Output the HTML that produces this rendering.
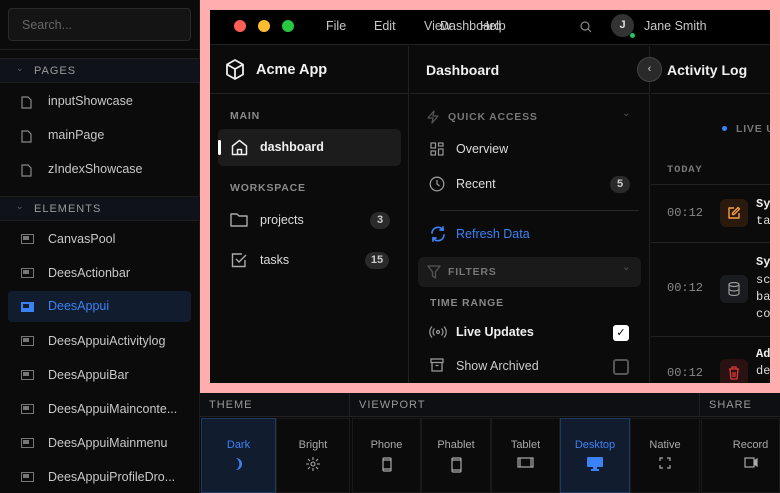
<!DOCTYPE html>
<html><head><meta charset="utf-8"><style>
*{box-sizing:border-box;margin:0;padding:0}
body{width:780px;height:493px;overflow:hidden;background:#0b0b0b;font-family:"Liberation Sans",sans-serif;position:relative;color:#ccc}
.abs{position:absolute}
.side{left:0;top:0;width:200px;height:493px;background:#0b0b0b;border-right:1px solid #1c1c1c}
.search{left:8px;top:8px;width:183px;height:33px;border:1px solid #2a2a2a;border-radius:4px;background:#141414;color:#666;font-size:12.5px;padding:9px 13px}
.sec{left:0;width:200px;height:25px;background:#0f1218;border-top:1px solid #1f1f1f;border-bottom:1px solid #1f1f1f;font-size:11px;letter-spacing:1px;color:#9a9a9a;padding:6px 0 0 34px}
.sec i{position:absolute;left:16px;top:4px;font-style:normal;color:#666;font-size:9px}
.it{left:0;width:200px;height:32px;font-size:12.5px;color:#c8c8c8;padding:0 0 0 48px;line-height:32px;white-space:nowrap}
.it svg{position:absolute;left:21px;top:11px}
.sel{left:8px;width:183px;background:#111c2e;border-radius:4px;color:#3b82f6;padding-left:40px}
.sel svg{left:13px}
.pink{left:200px;top:0;width:580px;height:393px;background:#ffadad}
.app{left:210px;top:10px;width:560px;height:373px;background:#0b0b0b;overflow:hidden}
.top{left:0;top:0;width:560px;height:35px;background:#000;border-bottom:1px solid #222}
.dot{top:10px;width:12px;height:12px;border-radius:50%}
.menu{top:9px;font-size:12.5px;color:#c8c8c8}
.nav{left:0;top:36px;width:199px;height:340px;border-right:1px solid #222}
.lbl{font-size:10.5px;font-weight:bold;letter-spacing:.8px;color:#8a8a8a;white-space:nowrap}
.badge{width:20px;height:17px;border-radius:9px;background:#2a2a2a;color:#ccc;font-size:11px;font-weight:bold;text-align:center;line-height:17px}
.cb{width:16px;height:16px;border-radius:3px;border:2px solid #555}
.mono{font-family:"Liberation Mono",monospace;white-space:nowrap}
.tb{top:393px;left:200px;width:580px;height:100px;background:#0b0b0b}
.tbh{top:0;height:24px;background:#0e0f13;border-bottom:1px solid #222;font-size:11px;letter-spacing:1px;color:#999;padding:6px 0 0 9px}
.btn{top:25px;height:75px;background:#0b0b0b;border:1px solid #1a1a1a;font-size:11px;color:#aaa;text-align:center;padding-top:20px}
.btn.on{background:#111c2e;border-color:#1e3a63;color:#3b82f6}
.btn svg{display:block;margin:6px auto 0}
.t13{font-size:12.5px;white-space:nowrap}
</style></head><body>
<div class="abs side">
 <div class="abs search">Search...</div>
 <div class="abs" style="left:0;top:49px;width:200px;border-top:1px solid #1f1f1f"></div>
 <div class="abs sec" style="top:58px"><i>⌄</i>PAGES</div>
 <div class="abs it" style="top:85px"><svg width="11" height="13" viewBox="0 0 11 13" fill="none" stroke="#888" stroke-width="1.2"><path d="M1 1h6l3 3v8H1z"/></svg>inputShowcase</div>
 <div class="abs it" style="top:119px"><svg width="11" height="13" viewBox="0 0 11 13" fill="none" stroke="#888" stroke-width="1.2"><path d="M1 1h6l3 3v8H1z"/></svg>mainPage</div>
 <div class="abs it" style="top:153px"><svg width="11" height="13" viewBox="0 0 11 13" fill="none" stroke="#888" stroke-width="1.2"><path d="M1 1h6l3 3v8H1z"/></svg>zIndexShowcase</div>
 <div class="abs sec" style="top:196px"><i>⌄</i>ELEMENTS</div>
 <div class="abs it" style="top:223px"><svg width="13" height="10" viewBox="0 0 13 10"><rect x=".5" y=".5" width="12" height="9" fill="none" stroke="#777"/><rect x="2" y="2" width="6" height="4" fill="#777"/></svg>CanvasPool</div>
 <div class="abs it" style="top:257px"><svg width="13" height="10" viewBox="0 0 13 10"><rect x=".5" y=".5" width="12" height="9" fill="none" stroke="#777"/><rect x="2" y="2" width="6" height="4" fill="#777"/></svg>DeesActionbar</div>
 <div class="abs it sel" style="top:291px;height:31px;line-height:31px"><svg width="13" height="10" viewBox="0 0 13 10"><rect x="0" y="0" width="13" height="10" fill="#3b82f6"/><rect x="2" y="2" width="6" height="4" fill="#111c2e"/></svg>DeesAppui</div>
 <div class="abs it" style="top:325px"><svg width="13" height="10" viewBox="0 0 13 10"><rect x=".5" y=".5" width="12" height="9" fill="none" stroke="#777"/><rect x="2" y="2" width="6" height="4" fill="#777"/></svg>DeesAppuiActivitylog</div>
 <div class="abs it" style="top:359px"><svg width="13" height="10" viewBox="0 0 13 10"><rect x=".5" y=".5" width="12" height="9" fill="none" stroke="#777"/><rect x="2" y="2" width="6" height="4" fill="#777"/></svg>DeesAppuiBar</div>
 <div class="abs it" style="top:393px"><svg width="13" height="10" viewBox="0 0 13 10"><rect x=".5" y=".5" width="12" height="9" fill="none" stroke="#777"/><rect x="2" y="2" width="6" height="4" fill="#777"/></svg>DeesAppuiMainconte...</div>
 <div class="abs it" style="top:427px"><svg width="13" height="10" viewBox="0 0 13 10"><rect x=".5" y=".5" width="12" height="9" fill="none" stroke="#777"/><rect x="2" y="2" width="6" height="4" fill="#777"/></svg>DeesAppuiMainmenu</div>
 <div class="abs it" style="top:461px"><svg width="13" height="10" viewBox="0 0 13 10"><rect x=".5" y=".5" width="12" height="9" fill="none" stroke="#777"/><rect x="2" y="2" width="6" height="4" fill="#777"/></svg>DeesAppuiProfileDro...</div>
</div>
<div class="abs pink"></div>
<div class="abs app">
 <div class="abs top">
  <div class="abs dot" style="left:24px;background:#ff5f57"></div>
  <div class="abs dot" style="left:48px;background:#febc2e"></div>
  <div class="abs dot" style="left:72px;background:#28c840"></div>
  <div class="abs menu" style="left:116px">File</div>
  <div class="abs menu" style="left:164px">Edit</div>
  <div class="abs menu" style="left:214px">View</div>
  <div class="abs menu" style="left:230px">Dashboard</div>
  <div class="abs menu" style="left:270px">Help</div>
  <svg class="abs" style="left:370px;top:11px" width="12" height="12" viewBox="0 0 12 12" fill="none" stroke="#888" stroke-width="1.2"><circle cx="5" cy="5" r="4"/><path d="M8 8l3 3"/></svg>
  <div class="abs" style="left:401px;top:4px;width:23px;height:23px;border-radius:50%;background:#333;color:#ddd;font-size:11px;font-weight:bold;text-align:center;line-height:23px">J</div>
  <div class="abs" style="left:420px;top:23px;width:5px;height:5px;border-radius:50%;background:#22c55e"></div>
  <div class="abs menu" style="left:434px">Jane Smith</div>
 </div>
 <div class="abs nav">
  <div class="abs" style="left:0;top:0;width:199px;height:48px;border-bottom:1px solid #222"></div>
  <svg class="abs" style="left:15px;top:13px" width="20" height="22" viewBox="0 0 20 22" fill="none" stroke="#eee" stroke-width="1.8" stroke-linejoin="round"><path d="M10 1l8 4.5v10L10 20l-8-4.5v-10z"/><path d="M2 5.5l8 4.5 8-4.5M10 10v10"/></svg>
  <div class="abs" style="left:46px;top:16px;font-size:14.5px;font-weight:bold;color:#f2f2f2">Acme App</div>
  <div class="abs lbl" style="left:20px;top:64px">MAIN</div>
  <div class="abs" style="left:8px;top:83px;width:183px;height:37px;background:#1c1c1c;border-radius:5px"></div>
  <div class="abs" style="left:8px;top:94px;width:3px;height:15px;background:#fff;border-radius:2px"></div>
  <svg class="abs" style="left:21px;top:93px" width="17" height="17" viewBox="0 0 17 17" fill="none" stroke="#eee" stroke-width="1.5" stroke-linejoin="round"><path d="M1.5 7L8.5 1.5 15.5 7v8.5h-14z"/><path d="M6.5 15.5v-5h4v5"/></svg>
  <div class="abs t13" style="left:50px;top:94px;font-weight:bold;color:#f0f0f0">dashboard</div>
  <div class="abs lbl" style="left:20px;top:136px">WORKSPACE</div>
  <svg class="abs" style="left:20px;top:166px" width="18" height="15" viewBox="0 0 18 15" fill="none" stroke="#aaa" stroke-width="1.4" stroke-linejoin="round"><path d="M1 2h6l2 2h8v10H1z"/></svg>
  <div class="abs t13" style="left:50px;top:167px;color:#ddd">projects</div>
  <div class="abs badge" style="left:160px;top:166px">3</div>
  <svg class="abs" style="left:21px;top:206px" width="16" height="16" viewBox="0 0 16 16" fill="none" stroke="#aaa" stroke-width="1.4"><path d="M14 8v6.5H1.5V2H11"/><path d="M5 7l3 3 7-7"/></svg>
  <div class="abs t13" style="left:50px;top:207px;color:#ddd">tasks</div>
  <div class="abs badge" style="left:155px;top:206px;width:24px">15</div>
 </div>
 <div class="abs" style="left:200px;top:36px;width:240px;height:340px;border-right:1px solid #222">
  <div class="abs" style="left:0;top:0;width:240px;height:48px;border-bottom:1px solid #222"></div>
  <div class="abs" style="left:16px;top:16px;font-size:14px;font-weight:bold;color:#f0f0f0">Dashboard</div>
  <svg class="abs" style="left:17px;top:64px" width="12" height="14" viewBox="0 0 12 14" fill="none" stroke="#555" stroke-width="1.3" stroke-linejoin="round"><path d="M7 1L1 8h5l-1 5 6-7H6z"/></svg>
  <div class="abs lbl" style="left:38px;top:65px;color:#777">QUICK ACCESS</div>
  <div class="abs" style="left:212px;top:62px;color:#555;font-size:10px">⌄</div>
  <svg class="abs" style="left:20px;top:96px" width="14" height="14" viewBox="0 0 14 14" fill="none" stroke="#999" stroke-width="1.2"><rect x="1" y="1" width="4.5" height="5"/><rect x="8.5" y="1" width="4.5" height="3"/><rect x="1" y="9" width="4.5" height="4"/><rect x="8.5" y="7" width="4.5" height="6"/></svg>
  <div class="abs t13" style="left:46px;top:96px;color:#ddd">Overview</div>
  <svg class="abs" style="left:19px;top:130px" width="16" height="16" viewBox="0 0 16 16" fill="none" stroke="#999" stroke-width="1.3"><circle cx="8" cy="8" r="6.8"/><path d="M8 4v4l2.5 2"/></svg>
  <div class="abs t13" style="left:46px;top:131px;color:#ddd">Recent</div>
  <div class="abs badge" style="left:200px;top:130px">5</div>
  <div class="abs" style="left:30px;top:164px;width:199px;border-top:1px solid #2a2a2a"></div>
  <svg class="abs" style="left:20px;top:180px" width="16" height="16" viewBox="0 0 16 16" fill="none" stroke="#3b82f6" stroke-width="1.7" stroke-linecap="round"><path d="M2 7a6 6 0 0 1 11-3M14 9a6 6 0 0 1-11 3"/><path d="M13 1v3h-3M3 15v-3h3"/></svg>
  <div class="abs t13" style="left:46px;top:181px;color:#3b82f6">Refresh Data</div>
  <div class="abs" style="left:8px;top:211px;width:223px;height:30px;background:#1a1a1a;border-radius:6px"></div>
  <svg class="abs" style="left:17px;top:219px" width="14" height="14" viewBox="0 0 14 14" fill="none" stroke="#555" stroke-width="1.3" stroke-linejoin="round"><path d="M1 1h12L8.5 7v6l-3-2V7z"/></svg>
  <div class="abs lbl" style="left:38px;top:220px;color:#777">FILTERS</div>
  <div class="abs" style="left:212px;top:216px;color:#555;font-size:10px">⌄</div>
  <div class="abs lbl" style="left:20px;top:251px;color:#888">TIME RANGE</div>
  <svg class="abs" style="left:19px;top:280px" width="18" height="12" viewBox="0 0 18 12" fill="none" stroke="#999" stroke-width="1.2"><circle cx="9" cy="6" r="1.5"/><path d="M5.5 2.5a5 5 0 0 0 0 7M12.5 2.5a5 5 0 0 1 0 7M3 0.5a8 8 0 0 0 0 11M15 0.5a8 8 0 0 1 0 11"/></svg>
  <div class="abs t13" style="left:46px;top:279px;font-weight:bold;color:#f0f0f0">Live Updates</div>
  <div class="abs" style="left:203px;top:279px;width:16px;height:16px;border-radius:3px;background:#fff;color:#000;font-size:11px;text-align:center;line-height:16px">✓</div>
  <svg class="abs" style="left:20px;top:312px" width="14" height="14" viewBox="0 0 14 14" fill="none" stroke="#999" stroke-width="1.3"><rect x="1" y="1" width="12" height="3.5"/><path d="M2 4.5V13h10V4.5M5.5 7.5h3"/></svg>
  <div class="abs t13" style="left:46px;top:313px;color:#ccc">Show Archived</div>
  <div class="abs cb" style="left:203px;top:313px"></div>
 </div>
 <div class="abs" style="left:441px;top:36px;width:120px;height:340px">
  <div class="abs" style="left:0;top:0;width:120px;height:48px;border-bottom:1px solid #222"></div>
  <div class="abs" style="left:16px;top:16px;font-size:14px;font-weight:bold;color:#f0f0f0;white-space:nowrap">Activity Log</div>
  <div class="abs" style="left:71px;top:80px;width:5px;height:5px;border-radius:50%;background:#3b82f6"></div>
  <div class="abs lbl" style="left:85px;top:77px;color:#777">LIVE U</div>
  <div class="abs lbl mono" style="left:16px;top:118px;color:#777">TODAY</div>
  <div class="abs" style="left:0;top:138px;width:120px;border-top:1px solid #222"></div>
  <div class="abs mono" style="left:16px;top:160px;font-size:12px;color:#888">00:12</div>
  <div class="abs" style="left:69px;top:153px;width:28px;height:28px;border-radius:6px;background:#2a1a0d"></div>
  <svg class="abs" style="left:76px;top:160px" width="14" height="14" viewBox="0 0 14 14" fill="none" stroke="#f59e42" stroke-width="1.4" stroke-linejoin="round"><path d="M7 2H2v10h10V7"/><path d="M11 1.5l1.5 1.5L7 8.5H5.5V7z"/></svg>
  <div class="abs mono" style="left:105px;top:151px;font-size:12px;font-weight:bold;color:#eee">Sy</div>
  <div class="abs mono" style="left:105px;top:168px;font-size:12px;color:#ddd">ta</div>
  <div class="abs" style="left:0;top:196px;width:120px;border-top:1px solid #222"></div>
  <div class="abs mono" style="left:16px;top:235px;font-size:12px;color:#888">00:12</div>
  <div class="abs" style="left:69px;top:229px;width:28px;height:28px;border-radius:6px;background:#1a1b1e"></div>
  <svg class="abs" style="left:77px;top:236px" width="12" height="14" viewBox="0 0 12 14" fill="none" stroke="#999" stroke-width="1.2"><ellipse cx="6" cy="2.5" rx="5" ry="2"/><path d="M1 2.5v9c0 1 2 2 5 2s5-1 5-2v-9M1 7c0 1 2 2 5 2s5-1 5-2"/></svg>
  <div class="abs mono" style="left:105px;top:209px;font-size:12px;font-weight:bold;color:#eee">Sy</div>
  <div class="abs mono" style="left:105px;top:226px;font-size:12px;color:#ddd;line-height:17px">sc<br>ba<br>co</div>
  <div class="abs" style="left:0;top:290px;width:120px;border-top:1px solid #222"></div>
  <div class="abs mono" style="left:16px;top:320px;font-size:12px;color:#888">00:12</div>
  <div class="abs" style="left:69px;top:313px;width:28px;height:28px;border-radius:6px;background:#2a1212"></div>
  <svg class="abs" style="left:77px;top:320px" width="12" height="14" viewBox="0 0 12 14" fill="none" stroke="#dc3a3a" stroke-width="1.3"><path d="M1 3h10M4 3V1h4v2M2 3l1 10h6l1-10M5 6v5M7 6v5"/></svg>
  <div class="abs mono" style="left:105px;top:301px;font-size:12px;font-weight:bold;color:#eee">Ad</div>
  <div class="abs mono" style="left:105px;top:318px;font-size:12px;color:#ddd">de</div>
 </div>
 <div class="abs" style="left:427px;top:47px;width:25px;height:25px;border-radius:50%;background:#2a2a2a;border:1px solid #444;color:#ccc;font-size:11px;text-align:center;line-height:22px">‹</div>
</div>
<div class="abs tb">
 <div class="abs tbh" style="left:0;width:150px;border-right:1px solid #222">THEME</div>
 <div class="abs tbh" style="left:150px;width:350px;border-right:1px solid #222">VIEWPORT</div>
 <div class="abs tbh" style="left:500px;width:80px">SHARE</div>
 <div class="abs btn on" style="left:1px;width:75px">Dark<svg width="12" height="14" viewBox="0 0 12 14"><path d="M3 1a6 6 0 0 1 0 12 7 7 0 0 0 0-12z" fill="#3b82f6"/></svg></div>
 <div class="abs btn" style="left:76px;width:74px">Bright<svg width="14" height="14" viewBox="0 0 14 14" stroke="#aaa" stroke-width="1.1"><circle cx="7" cy="7" r="2" fill="none"/><path d="M7 0v3M7 11v3M0 7h3M11 7h3M2 2l2 2M10 10l2 2M12 2l-2 2M2 12l2-2"/></svg></div>
 <div class="abs btn" style="left:152px;width:69px">Phone<svg width="10" height="15" viewBox="0 0 10 15" fill="none" stroke="#aaa" stroke-width="1.2"><rect x="1" y="1" width="8" height="13" rx="1"/><path d="M1 3h8M1 12h8"/></svg></div>
 <div class="abs btn" style="left:221px;width:70px">Phablet<svg width="11" height="16" viewBox="0 0 11 16" fill="none" stroke="#aaa" stroke-width="1.2"><rect x="1" y="1" width="9" height="14" rx="1"/><path d="M1 3h9M1 13h9"/></svg></div>
 <div class="abs btn" style="left:291px;width:69px">Tablet<svg width="17" height="11" viewBox="0 0 17 11" fill="none" stroke="#aaa" stroke-width="1.2"><rect x="1" y="1" width="15" height="9"/><path d="M3 1v9M14 1v9"/></svg></div>
 <div class="abs btn on" style="left:360px;width:70px">Desktop<svg width="16" height="14" viewBox="0 0 16 14"><rect x="0" y="0" width="16" height="10" rx="1" fill="#3b82f6"/><rect x="6" y="10" width="4" height="2" fill="#3b82f6"/><rect x="4" y="12" width="8" height="2" fill="#3b82f6"/></svg></div>
 <div class="abs btn" style="left:430px;width:70px">Native<svg width="12" height="12" viewBox="0 0 12 12" fill="none" stroke="#aaa" stroke-width="1.2"><path d="M1 4V1h3M8 1h3v3M11 8v3H8M4 11H1V8"/></svg></div>
 <div class="abs btn" style="left:501px;width:79px;padding-left:20px">Record<svg width="14" height="11" viewBox="0 0 14 11" fill="none" stroke="#aaa" stroke-width="1.2"><rect x="1" y="1" width="9" height="9"/><path d="M10 4l3-2v7l-3-2" fill="#aaa"/></svg></div>
</div>
</body></html>
